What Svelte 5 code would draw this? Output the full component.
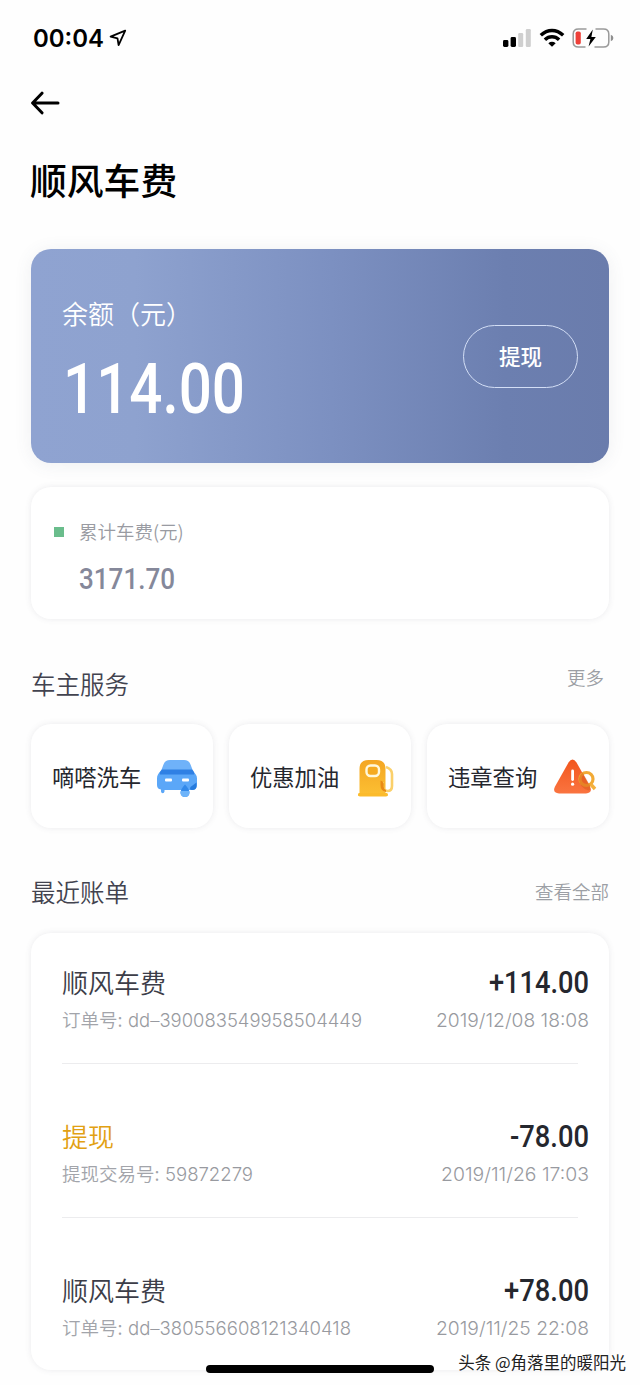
<script>
	const balance = '114.00'
	const total = '3171.70'

	const services = [
		{ name: '嘀嗒洗车', icon: 'wash' },
		{ name: '优惠加油', icon: 'fuel' },
		{ name: '违章查询', icon: 'ticket' },
	]

	// width: drawn width of the amount, the digits are condensed to it
	const bills = [
		{ title: '顺风车费', label: '订单号', no: 'dd–390083549958504449', noWidth: 234, amount: '+114.00', width: 100, time: '2019/12/08 18:08', timeWidth: 153 },
		{ title: '提现', label: '提现交易号', no: '59872279', noWidth: 88, amount: '-78.00', width: 79, time: '2019/11/26 17:03', timeWidth: 148, out: true },
		{ title: '顺风车费', label: '订单号', no: 'dd–380556608121340418', noWidth: 223, amount: '+78.00', width: 85, time: '2019/11/25 22:08', timeWidth: 153 },
	]
</script>

{#snippet fitted(text, width, height, cls)}
	<svg class="fitted {cls}" {width} {height} viewBox="0 0 {width} {height}">
		<text x="0" y={height} textLength={width} lengthAdjust="spacingAndGlyphs">{text}</text>
	</svg>
{/snippet}

<main>
	<header class="status">
		<div class="clock">
			{@render fitted('00:04', 71, 18, 'time')}
			<svg width="18" height="18" viewBox="0 0 18 18">
				<path d="M16.2 1.6 1.6 7.7l6.9 1.6 1.1 6.9z" fill="none" stroke="#000" stroke-width="1.8" stroke-linejoin="round" />
			</svg>
		</div>
		<div class="signals">
			<svg width="30" height="20" viewBox="0 0 30 20">
				<rect x="1" y="12" width="5.4" height="7" rx="1.4" />
				<rect x="8.6" y="9" width="5.4" height="10" rx="1.4" />
				<rect x="16.2" y="5" width="5" height="14" rx="1.2" fill="#cfcfcf" />
				<rect x="23.8" y="1" width="5" height="18" rx="1.2" fill="#cfcfcf" />
			</svg>
			<svg width="26" height="20" viewBox="0 0 26 20">
				<g fill="none" stroke="#000" stroke-width="3.5">
					<path d="M1.8 7.2Q7 2.4 13 2.4t11.2 4.8" />
					<path d="M5.9 11.7Q9 8.8 13 8.8t7.1 2.9" />
				</g>
				<path d="M9.3 15.2Q13 12.3 16.7 15.2L13 18.8z" />
			</svg>
			<svg width="42" height="20" viewBox="0 0 42 20">
				<path d="M14.5 1H6.5Q1.2 1 1.2 6v8q0 5 5.3 5h7M23.5 1h8q5.3 0 5.3 5v8q0 5-5.3 5h-9" fill="none" stroke="#9a9a9a" stroke-width="1.5" />
				<path d="M38.8 6.8q2.6 1 2.6 3.2t-2.6 3.2z" fill="#8f8f8f" />
				<rect x="3.6" y="3.4" width="5.2" height="13.2" rx="1.8" fill="#ee4039" />
				<path d="M20.8 1.6 14.2 11h4.2l-1.8 7.4L23.8 9h-4.4z" />
			</svg>
		</div>
	</header>

	<nav>
		<svg width="30" height="24" viewBox="0 0 30 24">
			<path d="M27 12H2.5M11 2.2 1.6 12l9.4 9.8" fill="none" stroke="#000" stroke-width="3" stroke-linecap="round" stroke-linejoin="round" />
		</svg>
	</nav>

	<h1>顺风车费</h1>

	<section class="balance">
		<div>
			<p>余额<span class="open">（</span>元<span class="close">）</span></p>
			{@render fitted(balance, 182, 50, 'big')}
		</div>
		<button>提现</button>
	</section>

	<section class="total card">
		<i></i>
		<div>
			<p>累计车费(元)</p>
			{@render fitted(total, 96, 22, 'mid')}
		</div>
	</section>

	<div class="heading services-heading">
		<h2>车主服务</h2>
		<a href="#more">更多</a>
	</div>

	<section class="services">
		{#each services as service}
			<div class="service card">
				<span>{service.name}</span>
				{#if service.icon === 'wash'}
					<svg width="42" height="40" viewBox="0 0 42 40">
						<path d="M1 19.500Q1 15 5 12h31q5 3 5 7.500V26q0 5-5 5H8.500v1.500q-.3 1.800-1.800 1.800T5 32.500V30.500Q1 30 1 26z" fill="#5ba7f8" />
						<path d="M5 12 7.500 5.500Q9 1 14 1h14q5 0 6.500 4.500L37 12v3H5z" fill="#6fb2f9" />
						<path d="M6 10.500h30q3 2.500 2 5H4q-1-2.500 2-5z" fill="#2f80e4" />
						<rect x="9" y="19.500" width="7" height="3" rx="1" fill="#fff" />
						<rect x="26" y="19.500" width="7" height="3" rx="1" fill="#fff" />
						<path d="M40.500 23.500V27q0 4-4.500 4-3 0-1.500-3z" fill="#267bdd" />
						<path d="M29 25.500q-4.500 5-4.500 8a4.500 4.500 0 0 0 9 0Q33.500 30.500 29 25.500z" fill="#3289ea" />
						<path d="M24.700 32h8.600q.8 6-4.300 6t-4.300-6z" fill="#6eb4fa" />
					</svg>
				{:else if service.icon === 'fuel'}
					<svg width="42" height="40" viewBox="0 0 42 40">
						<defs>
							<linearGradient id="pump" x1="0" y1="0" x2="0" y2="1">
								<stop offset="0" stop-color="#f4a623" />
								<stop offset="1" stop-color="#fcc033" />
							</linearGradient>
						</defs>
						<path d="M5.500 10q0-9 9-9h8q9 0 9 9v24q2 1 2 3H4.500q-1-2 1-3z" fill="url(#pump)" />
						<path d="M5.500 34h27q1.500 0 1.500 1.700t-2 1.800H6q-2 0-2-1.800T5.500 34z" fill="#fbbb2c" />
						<rect x="12.500" y="6.500" width="12.500" height="10.500" rx="4" fill="#f5aa20" stroke="#fff8dc" stroke-width="2.400" />
						<path d="M32 8q6 2 6 7v12q0 5-4.500 5t-5-5v-4" fill="none" stroke="#fbd06a" stroke-width="2.600" />
						<path d="M26.500 21.500q2 0 3.200 3V28q.5 2.500 2.300 3v2q-5.500-1-5.500-7z" fill="#e98a14" />
					</svg>
				{:else}
					<svg class="ticket" width="44" height="40" viewBox="0 0 44 40">
						<defs>
							<linearGradient id="warn" x1="0" y1="0" x2="0" y2="1">
								<stop offset="0" stop-color="#f2561d" />
								<stop offset="1" stop-color="#fa7440" />
							</linearGradient>
						</defs>
						<path d="M14.500 3.500q4-6 8 0L36 27.500q3 6.500-4 7H5q-7-.5-4-7z" fill="url(#warn)" />
						<path d="M18.600 12v8.500" stroke="#fff" stroke-width="2.800" stroke-linecap="round" />
						<circle cx="18.600" cy="25.200" r="1.600" fill="#fff" />
						<circle cx="32.500" cy="20" r="6.500" fill="none" stroke="#f2aa35" stroke-width="3.200" />
						<path d="m37 25.500 4 4.500" stroke="#f5b13d" stroke-width="3.400" />
						<path d="M28.600 13.500 36 26.500v4.500l-1.500.5q-9-3-9.500-10.500 0-5 3.600-7.500z" fill="#d95a17" opacity=".5" />
					</svg>
				{/if}
			</div>
		{/each}
	</section>

	<div class="heading bills-heading">
		<h2>最近账单</h2>
		<a href="#all">查看全部</a>
	</div>

	<section class="bills card">
		{#each bills as bill}
			<article>
				<div class="row">
					<h3 class:out={bill.out}>{bill.title}</h3>
					{@render fitted(bill.amount, bill.width, 22, 'amount')}
				</div>
				<div class="row meta">
					<div class="number">
						<span>{bill.label}:</span>
						{@render fitted(bill.no, bill.noWidth, 14, 'small')}
					</div>
					{@render fitted(bill.time, bill.timeWidth, 14, 'small')}
				</div>
			</article>
		{/each}
	</section>

	<div class="home-bar"></div>
	<div class="watermark">头条 @角落里的暖阳光</div>
</main>

<style>
	:global(body) {
		background: #fefefe;
	}

	main {
		position: relative;
		box-sizing: border-box;
		width: 640px;
		height: 1385px;
		padding: 0 31px;
		overflow: hidden;
		font-family: 'Noto Sans CJK SC', sans-serif;
		color: #000;
	}

	h1, h2, h3, p {
		margin: 0;
		font-weight: 400;
	}

	svg {
		display: block;
		flex: none;
	}

	.fitted {
		overflow: visible;
		font-family: Roboto, sans-serif;
		font-weight: 500;
		fill: currentColor;
	}

	.time {
		font-family: Inter, sans-serif;
		font-weight: 600;
		font-size: 24px;
	}

	.big {
		font-size: 70px;
	}

	.mid {
		font-size: 30px;
		color: #85889a;
	}

	.amount {
		font-size: 31px;
		color: #25272e;
	}

	.small {
		font-family: Inter, sans-serif;
		font-weight: 300;
		font-size: 18.5px;
		color: #989aa0;
	}

	.status {
		display: flex;
		justify-content: space-between;
		height: 77px;
		margin-right: -5px;
		padding: 28px 0 0 2px;
		box-sizing: border-box;
	}

	.clock {
		display: flex;
		gap: 5px;
		padding-top: 1px;
	}

	.signals {
		display: flex;
		gap: 7px;
	}

	nav {
		height: 69px;
		padding-top: 14px;
		box-sizing: border-box;
	}

	h1 {
		height: 103px;
		line-height: 66px;
		font-size: 36.8px;
		font-weight: 500;
		margin-left: -1px;
	}

	.balance {
		display: flex;
		justify-content: space-between;
		box-sizing: border-box;
		height: 214px;
		padding: 45px 31px 0 32px;
		border-radius: 20px;
		background: linear-gradient(90deg, #8fa3d1 0%, #8ea2cf 18%, #7c90c1 52%, #6c7fb0 82%, #6a7cac 100%);
		box-shadow: 0 2px 18px rgba(80, 90, 110, .09);
		color: #fff;
	}

	.balance p {
		height: 69px;
		margin-left: -1px;
		line-height: 38px;
		font-size: 26px;
		font-weight: 350;
	}

	/* half-width forms of the brackets, so they hug the character between them */
	.open,
	.close {
		font-feature-settings: 'halt';
	}

	.open {
		margin-left: 13px;
	}

	button {
		width: 115px;
		height: 63px;
		margin-top: 31px;
		padding: 0 0 3px;
		border: 1px solid #d3def5;
		border-radius: 32px;
		background: none;
		color: #fff;
		font-family: inherit;
		font-size: 21.5px;
		font-weight: 500;
	}

	.card {
		border-radius: 20px;
		background: #fff;
		box-shadow: 0 0 6px rgba(80, 85, 100, .11);
	}

	.total {
		display: flex;
		gap: 15px;
		box-sizing: border-box;
		height: 132px;
		margin-top: 24px;
		padding: 29px 23px 0;
	}

	.total i {
		width: 10px;
		height: 10px;
		margin-top: 11px;
		background: #6abd8c;
	}

	.total p {
		height: 51px;
		line-height: 30px;
		font-size: 18.5px;
		font-weight: 350;
		color: #999ba2;
	}

	.heading {
		display: flex;
		justify-content: space-between;
	}

	.heading h2 {
		line-height: 38px;
		font-size: 24.5px;
		font-weight: 350;
		color: #42434f;
	}

	.heading a {
		line-height: 30px;
		font-size: 18.5px;
		font-weight: 350;
		color: #9c9fa5;
		text-decoration: none;
	}

	.services-heading {
		height: 105px;
		padding: 46px 5px 0 0;
		box-sizing: border-box;
	}

	.services-heading a {
		margin-top: -3px;
	}

	.services {
		display: grid;
		grid-template-columns: repeat(3, 1fr);
		gap: 16px;
	}

	.service {
		display: flex;
		align-items: center;
		justify-content: space-between;
		box-sizing: border-box;
		height: 104px;
		padding: 0 15px 0 21px;
	}

	.service span {
		margin-top: -1px;
		font-size: 22.3px;
		font-weight: 400;
		color: #25272e;
	}

	.service svg {
		margin-top: 5px;
	}

	.service .ticket {
		margin-right: -4px;
	}

	.bills-heading {
		height: 105px;
		padding-top: 45px;
		box-sizing: border-box;
	}

	.bills-heading a {
		margin-top: 3px;
	}

	.bills {
		box-sizing: border-box;
		height: 437px;
		padding: 0 31px;
	}

	article {
		box-sizing: border-box;
		height: 154px;
		padding-top: 31px;
		border-bottom: 1px solid #ececee;
	}

	article:first-child {
		height: 131px;
	}

	article + article {
		padding-top: 54px;
	}

	article:last-child {
		border-bottom: none;
	}

	.row {
		display: flex;
		justify-content: space-between;
		align-items: center;
		height: 36px;
		margin-right: -11px;
	}

	h3 {
		line-height: 36px;
		font-size: 26px;
		font-weight: 350;
		color: #3c3d48;
	}

	.out {
		color: #e2a112;
	}

	.meta {
		height: 40px;
	}

	.number {
		display: flex;
		align-items: center;
		gap: 6px;
		font-size: 18.5px;
		font-weight: 350;
		line-height: 30px;
		color: #a2a4aa;
	}

	.number span {
		margin-top: -2px;
	}

	.home-bar {
		position: absolute;
		left: 206px;
		top: 1365px;
		width: 228px;
		height: 8px;
		border-radius: 4px;
		background: #000;
	}

	.watermark {
		position: absolute;
		right: 14px;
		top: 1350px;
		line-height: 24px;
		font-size: 16.5px;
		white-space: nowrap;
		color: #222;
		text-shadow: -1px -1px 0 #fff;
	}
</style>
